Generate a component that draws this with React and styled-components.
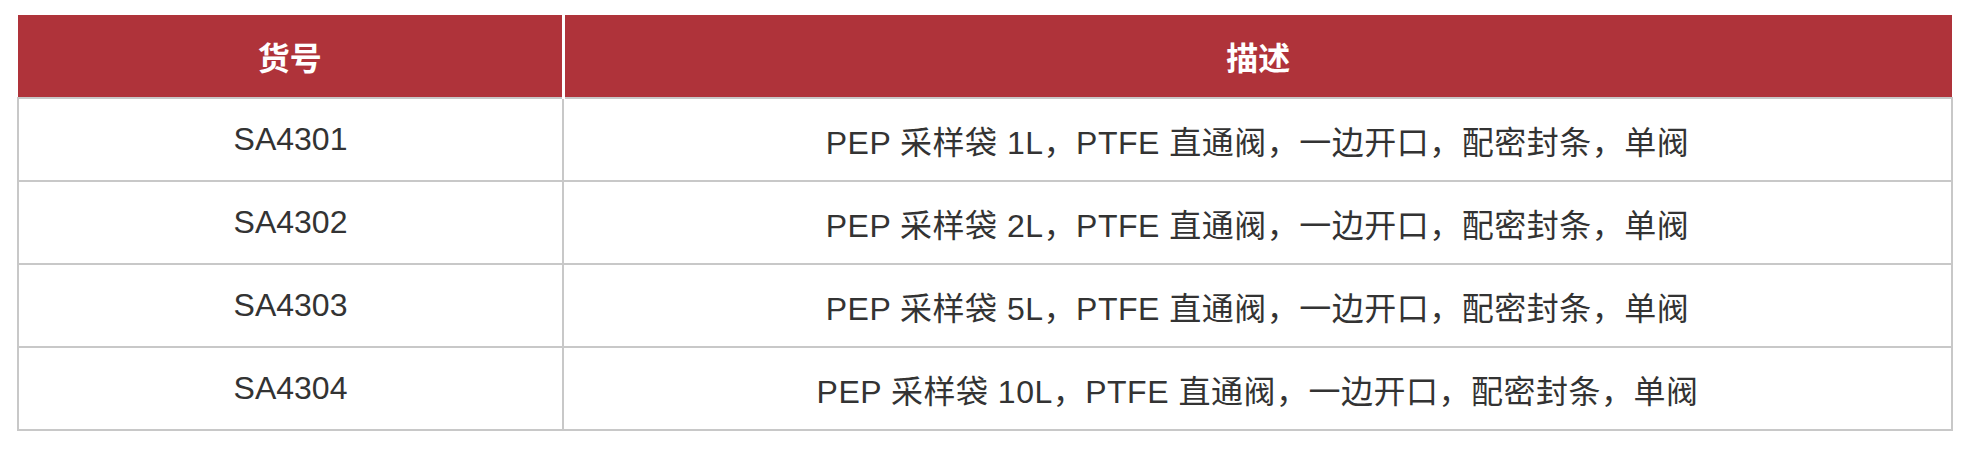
import React from 'react';
import styled, { createGlobalStyle } from 'styled-components';

const GlobalStyle = createGlobalStyle`
  html, body {
    margin: 0;
    padding: 0;
    background: #ffffff;
  }
  body {
    font-family: "Liberation Sans", "Noto Sans CJK SC", sans-serif;
  }
`;

const rows = [
  { code: 'SA4301', desc: 'PEP 采样袋 1L，PTFE 直通阀，一边开口，配密封条，单阀' },
  { code: 'SA4302', desc: 'PEP 采样袋 2L，PTFE 直通阀，一边开口，配密封条，单阀' },
  { code: 'SA4303', desc: 'PEP 采样袋 5L，PTFE 直通阀，一边开口，配密封条，单阀' },
  { code: 'SA4304', desc: 'PEP 采样袋 10L，PTFE 直通阀，一边开口，配密封条，单阀' },
];

function App() {
  return (
    <Page>
      <GlobalStyle />
      <Table>
        <colgroup>
          <col style={{ width: '545px' }} />
          <col />
        </colgroup>
        <thead>
          <tr>
            <HeadCell>货号</HeadCell>
            <HeadCell>描述</HeadCell>
          </tr>
        </thead>
        <tbody>
          {rows.map((row) => (
            <tr key={row.code}>
              <Cell>{row.code}</Cell>
              <Cell $wide>{row.desc}</Cell>
            </tr>
          ))}
        </tbody>
      </Table>
    </Page>
  );
}

export default App;

const Page = styled.div`
  padding: 15px 0 0 17px;
`;

const Table = styled.table`
  width: 1936px;
  border-collapse: collapse;
  table-layout: fixed;
`;

const HeadCell = styled.th`
  height: 82px;
  padding: 0;
  background-color: #af333a;
  color: #ffffff;
  font-size: 32px;
  font-weight: 700;
  text-align: center;
  vertical-align: middle;
  border-right: 3px solid #ffffff;

  &:last-child {
    border-right: none;
  }
`;

const Cell = styled.td`
  height: 81px;
  padding: 0;
  color: #333333;
  font-size: 32px;
  letter-spacing: ${(p) => (p.$wide ? '0.5px' : '0')};
  text-align: center;
  vertical-align: middle;
  border: 2px solid #c8c8c8;
`;
